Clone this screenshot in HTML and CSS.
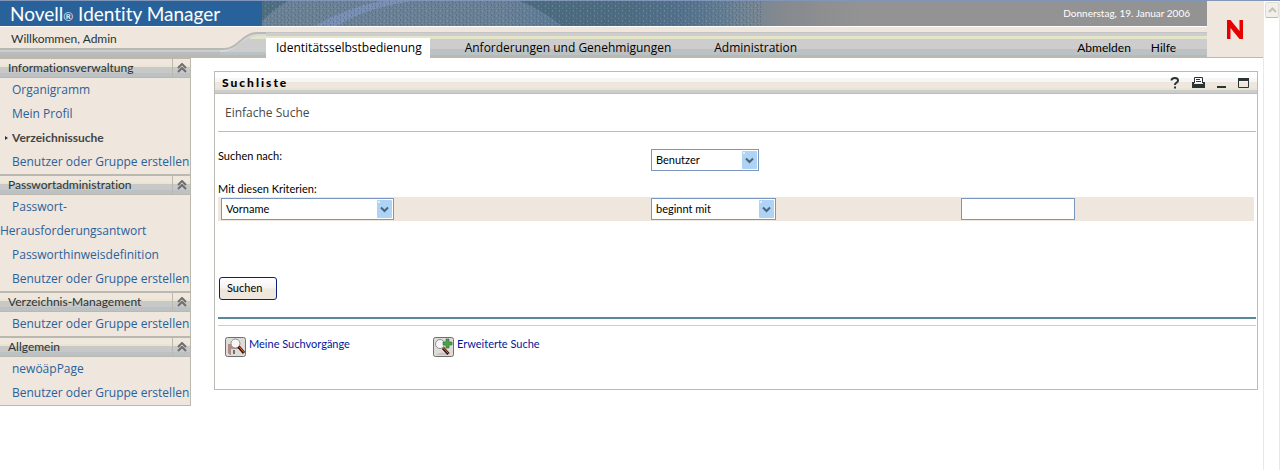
FILE: index.html
```html
<!DOCTYPE html>
<html lang="de">
<head>
<meta charset="utf-8">
<title>Novell Identity Manager</title>
<link rel="stylesheet" href="styles.css">
</head>
<body>
<div class="page">
  <div class="app">
    <header class="header">
      <div class="header-main">
        <div class="banner">
          <h1 class="brand">Novell<span class="reg">®</span> Identity Manager</h1>
          <svg class="banner-art" viewBox="0 0 600 25" width="600" height="25" preserveAspectRatio="xMinYMin slice" aria-hidden="true">
            <defs>
              <linearGradient id="sky" x1="0" x2="1" y1="0" y2="0">
                <stop offset="0" stop-color="#6d8294"/>
                <stop offset=".4" stop-color="#6a8196"/>
                <stop offset=".5" stop-color="#5d7c96"/>
                <stop offset=".68" stop-color="#567390"/>
                <stop offset=".78" stop-color="#6b8294"/>
                <stop offset=".87" stop-color="#868a8e"/>
                <stop offset="1" stop-color="#939393"/>
              </linearGradient>
              <linearGradient id="fade" x1="0" x2="1" y1="0" y2="0">
                <stop offset="0" stop-color="#4c6b7c"/>
                <stop offset=".5" stop-color="#4e6d82"/>
                <stop offset="1" stop-color="#567390" stop-opacity="0"/>
              </linearGradient>
              <pattern id="dots" width="7" height="5" patternUnits="userSpaceOnUse">
                <path d="M1 0h1v2h-1zM4 1h1v1h-1zM1 3h1v1h-1zM5 3h1v2h-1z" fill="#3b5a78" fill-opacity=".4"/>
                <path d="M3 0h1v1h-1zM6 2h1v1h-1zM3 4h1v1h-1z" fill="#8ea3bb" fill-opacity=".35"/>
              </pattern>
            </defs>
            <rect width="600" height="25" fill="url(#sky)"/>
            <path d="M0 0H26Q12 8 0 20Z" fill="#4f6e80"/>
            <path d="M52 25Q86 6 120 0H150Q100 8 76 25Z" fill="#7990b4"/>
            <path d="M258 0Q282 10 300 25H480V0Z" fill="url(#fade)"/>
            <rect width="500" height="25" fill="url(#dots)"/>
          </svg>
          <time class="date" datetime="2006-01-19">Donnerstag, 19. Januar 2006</time>
        </div>
        <div class="navbar">
          <div class="welcome">Willkommen, Admin</div>
          <svg class="curve" viewBox="0 0 46 31" width="46" height="31" aria-hidden="true">
            <path d="M0 22H4C18 22 22 6 38 6H46V31H0Z" fill="#cdcdcd"/>
            <path d="M36 9H46V12H29Q32 9 36 9Z" fill="#e4e4c8"/>
            <path d="M0 25H46V28H0Z" fill="#b9c2c4"/>
            <path d="M0 28H46V31H0Z" fill="#bbb8b0"/>
            <path d="M0 24C18 24 20 8 38 8H46" fill="none" stroke="#d8dadb" stroke-width="2"/>
            <path d="M0 22H4C18 22 22 6 38 6H46" fill="none" stroke="#b8b8b4" stroke-width="2"/>
          </svg>
          <nav class="tabs">
            <a class="tab tab-active" href="#">Identitätsselbstbedienung</a>
            <a class="tab" href="#">Anforderungen und Genehmigungen</a>
            <a class="tab" href="#">Administration</a>
            <span class="tab-gap"></span>
            <a class="tool" href="#">Abmelden</a>
            <a class="tool" href="#">Hilfe</a>
          </nav>
        </div>
      </div>
      <div class="logo">
        <svg viewBox="0 0 16 19" width="16" height="19" role="img" aria-label="Novell">
          <path d="M0 0H3.500L12.500 11V0H16V19H12.500L3.500 8V19H0Z" fill="#e60000"/>
        </svg>
      </div>
    </header>
    <div class="body">
      <nav class="sidebar">
        <section class="group">
          <h2 class="group-title">Informationsverwaltung<button class="collapse" type="button" aria-label="Einklappen"><svg width="10" height="10" viewBox="0 0 10 10"><path d="M1 5L5 1L9 5M1 9L5 5L9 9"/></svg></button></h2>
          <ul class="items">
            <li><a href="#">Organigramm</a></li>
            <li><a href="#">Mein Profil</a></li>
            <li class="current"><a href="#">Verzeichnissuche</a></li>
            <li><a href="#">Benutzer oder Gruppe erstellen</a></li>
          </ul>
        </section>
        <section class="group">
          <h2 class="group-title">Passwortadministration<button class="collapse" type="button" aria-label="Einklappen"><svg width="10" height="10" viewBox="0 0 10 10"><path d="M1 5L5 1L9 5M1 9L5 5L9 9"/></svg></button></h2>
          <ul class="items">
            <li class="wrapping"><a href="#">Passwort-<br>Herausforderungsantwort</a></li>
            <li><a href="#">Passworthinweisdefinition</a></li>
            <li><a href="#">Benutzer oder Gruppe erstellen</a></li>
          </ul>
        </section>
        <section class="group">
          <h2 class="group-title">Verzeichnis-Management<button class="collapse" type="button" aria-label="Einklappen"><svg width="10" height="10" viewBox="0 0 10 10"><path d="M1 5L5 1L9 5M1 9L5 5L9 9"/></svg></button></h2>
          <ul class="items">
            <li><a href="#">Benutzer oder Gruppe erstellen</a></li>
          </ul>
        </section>
        <section class="group">
          <h2 class="group-title">Allgemein<button class="collapse" type="button" aria-label="Einklappen"><svg width="10" height="10" viewBox="0 0 10 10"><path d="M1 5L5 1L9 5M1 9L5 5L9 9"/></svg></button></h2>
          <ul class="items">
            <li><a href="#">newöäpPage</a></li>
            <li><a href="#">Benutzer oder Gruppe erstellen</a></li>
          </ul>
        </section>
      </nav>
      <main class="portlet">
        <div class="portlet-bar">
          <h2 class="portlet-title">Suchliste</h2>
          <button class="bar-button" type="button" aria-label="Hilfe"><svg width="10" height="12" viewBox="0 0 10 12"><path d="M1.500 3.500Q1.500 1 4.800 1T8 3.500Q8 5 6.200 5.800Q5 6.400 5 8" fill="none" stroke="#2b3434" stroke-width="2"/><path d="M4 9.500h2v2h-2z" fill="#2b3434"/></svg></button>
          <button class="bar-button" type="button" aria-label="Drucken"><svg width="13" height="11" viewBox="0 0 13 11"><path d="M2.500 6V.5H10.500V6" fill="#fff" stroke="#2b3434"/><path d="M4 2.500h4M4 4.500h5" stroke="#2b3434"/><path d="M0 5h2v2h9v-2h2v6H0z" fill="#2b3434"/></svg></button>
          <button class="bar-button" type="button" aria-label="Minimieren"><svg width="9" height="11" viewBox="0 0 9 11"><path d="M0 9h9v2H0z" fill="#2b3434"/></svg></button>
          <button class="bar-button" type="button" aria-label="Maximieren"><svg width="11" height="10" viewBox="0 0 11 10"><path d="M.5 .5h10v9H.5z" fill="none" stroke="#2b3434"/><path d="M0 0h11v3H0z" fill="#2b3434"/></svg></button>
        </div>
        <form class="search">
          <h3 class="subtitle">Einfache Suche</h3>
          <div class="row subject">
            <label class="label" for="what">Suchen nach:</label>
            <span class="select w-108"><select id="what"><option>Benutzer</option></select><svg width="15" height="18" viewBox="0 0 15 18"><rect width="15" height="18" rx="1" fill="#aed3f5"/><path d="M1 1h2v2H1z" fill="#e6eef5"/><path d="M4 7.500L7.500 11L11 7.500" fill="none" stroke="#4a647c" stroke-width="2"/></svg></span>
          </div>
          <label class="label criteria-label" for="field">Mit diesen Kriterien:</label>
          <div class="row criteria">
            <span class="select w-173"><select id="field"><option>Vorname</option></select><svg width="15" height="18" viewBox="0 0 15 18"><rect width="15" height="18" rx="1" fill="#aed3f5"/><path d="M1 1h2v2H1z" fill="#e6eef5"/><path d="M4 7.500L7.500 11L11 7.500" fill="none" stroke="#4a647c" stroke-width="2"/></svg></span>
            <span class="select w-125"><select aria-label="Operator"><option>beginnt mit</option></select><svg width="15" height="18" viewBox="0 0 15 18"><rect width="15" height="18" rx="1" fill="#aed3f5"/><path d="M1 1h2v2H1z" fill="#e6eef5"/><path d="M4 7.500L7.500 11L11 7.500" fill="none" stroke="#4a647c" stroke-width="2"/></svg></span>
            <input class="text" type="text" aria-label="Wert">
          </div>
          <button class="submit" type="submit">Suchen</button>
        </form>
        <div class="links">
          <a class="link" href="#">
            <svg width="21" height="20" viewBox="0 0 21 20"><rect x=".5" y=".5" width="20" height="19" rx="2" fill="#dedbd8" stroke="#6f6f6f"/><path d="M3 7h11v11H5l-2-2z" fill="#b08c87"/><path d="M6 12h8v6H6z" fill="#dcdcdc"/><path d="M8 13h2v4H8z" fill="#77706e"/><circle cx="10.500" cy="6.500" r="4.500" fill="#f6f6f6" stroke="#909090"/><path d="M13.500 9.500L19 16" stroke="#3a1208" stroke-width="3"/><path d="M14 9.500L19 15.500" stroke="#e8793c"/></svg>
            Meine Suchvorgänge</a>
          <a class="link" href="#">
            <svg width="21" height="20" viewBox="0 0 21 20"><rect x=".5" y=".5" width="20" height="19" rx="2" fill="#dedbd8" stroke="#6f6f6f"/><path d="M3 18q5-5 14 0z" fill="#c4c2c2"/><circle cx="7" cy="7" r="4.500" fill="#f6f6f6" stroke="#909090"/><path d="M10 11L15.500 17" stroke="#3a1208" stroke-width="3"/><path d="M10.500 11L15.500 16.500" stroke="#e8793c"/><path d="M13 2h3v3h3v3h-3v3h-3V8h-3V5h3z" fill="#4fa04c" stroke="#2c7030" stroke-width=".6"/></svg>
            Erweiterte Suche</a>
        </div>
      </main>
    </div>
  </div>
  <div class="scrollbar">
    <button class="scroll-up" type="button" aria-label="Nach oben"><svg width="9" height="6" viewBox="0 0 9 6"><path d="M1 5L4.500 1.500L8 5" fill="none" stroke="#c4c2ba" stroke-width="2"/></svg></button>
  </div>
</div>
</body>
</html>
```
FILE: styles.css
```css
* { box-sizing: border-box; }

body {
  margin: 0;
  background: #fff;
  color: #000;
  font-family: Lato, "Liberation Sans", sans-serif;
  font-size: 12px;
  font-variant-ligatures: none;
}

a { color: inherit; text-decoration: none; }
button { font: inherit; padding: 0; border: 0; background: none; }
svg { display: block; }
h1, h2, h3, ul { margin: 0; padding: 0; font-weight: normal; }
ul { list-style: none; }

.page { display: flex; min-height: 100vh; border-top: 1px solid #8095b8; }
.app { flex: 1; min-width: 0; }

/* Header */
.header { display: flex; }
.header-main { flex: 1; min-width: 0; }
.banner {
  display: flex;
  height: 26px;
  background: #939393;
  color: #fff;
  border-bottom: 1px solid #fff;
}
.brand {
  flex: none;
  width: 262px;
  padding-left: 10px;
  background: #29629b;
  font-size: 19px;
  line-height: 25px;
  white-space: nowrap;
}
.reg { font-size: 12px; }
.banner-art { flex: 0 1 600px; min-width: 0; height: 25px; }
.date { margin-left: auto; padding-right: 17px; font-size: 10px; line-height: 24px; white-space: nowrap; }

.navbar { display: flex; height: 31px; background: #efe6de; }
.welcome {
  flex: none;
  width: 220px;
  padding-left: 11px;
  line-height: 24px;
  color: #2b3434;
  background: linear-gradient(#efe6de 21px, #b8b8b4 21px 23px, #cdcdcd 23px 25px, #b9bcbc 25px 28px, #bbb8b0 28px);
}
.curve { flex: none; }
.tabs {
  display: flex;
  flex: 1;
  align-items: stretch;
  background: linear-gradient(#efe6de 5px, #c4c4c4 5px 6px, #cdcdcd 6px 9px, #e4e4c8 9px 12px, #cdcdcd 12px 22px, #c0c0c0 22px 25px, #b9c2c4 25px 28px, #bbb8b0 28px);
}
.tab, .tool { margin-top: 11px; line-height: 20px; white-space: nowrap; }
.tab { padding: 0 8px 0 10px; margin-right: 25px; font-family: "Open Sans", sans-serif; }
.tab-active { background: #fff; }
.tab-gap { flex: 1; }
.tool { margin-right: 20px; }
.tool:last-child { margin-right: 31px; }
.logo {
  display: flex;
  align-items: center;
  justify-content: center;
  width: 56px;
  background: #efe6de;
  border-bottom: 1px solid #bbb8b0;
}

/* Sidebar */
.body { display: flex; align-items: flex-start; }
.sidebar {
  flex: none;
  width: 191px;
  background: #efe6de;
  border: solid #bbb8b0;
  border-width: 0 1px 1px 0;
}
.group-title {
  display: flex;
  height: 21px;
  padding-left: 8px;
  border: solid #bbb8b0;
  border-width: 2px 0 1px;
  background: linear-gradient(#efe6de 6px, #e8e6d0 6px 8px, #c8c8c8 8px 14px, #bcc2c4 14px);
  color: #2b3434;
  font-size: 12px;
  line-height: 18px;
}
.group:first-child .group-title { height: 20px; border-top-width: 1px; }
.collapse {
  display: grid;
  place-items: center;
  width: 18px;
  margin-left: auto;
  border-left: 1px solid #bbb8b0;
}
.collapse path { fill: none; stroke: #6e6e6e; stroke-width: 2; }
.items { font-family: "Open Sans", sans-serif; }
.items li { padding-left: 12px; line-height: 24px; color: #29629b; white-space: nowrap; }
.items .wrapping { padding-left: 0; text-indent: 12px; }
.items .current { padding-left: 5px; color: #444; font-family: Lato, sans-serif; font-weight: bold; }
.current::before {
  content: "";
  display: inline-block;
  margin-right: 4px;
  border: solid transparent;
  border-width: 2px 0 2px 3px;
  border-left-color: #333;
  vertical-align: 2px;
}

/* Portlet */
.portlet {
  flex: 1;
  min-width: 0;
  margin: 13px 5px 16px 23px;
  border: 1px solid #bbbbb5;
}
.portlet-bar {
  display: flex;
  align-items: center;
  gap: 12px;
  height: 22px;
  padding: 0 8px 0 7px;
  border-bottom: 1px solid #bbbbb5;
  background: linear-gradient(#fff 6px, #f6f6f6 6px 10px, #efe6de 10px 16px, #e8e6d0 16px 18px, #cdcdcd 18px);
}
.portlet-title { margin-right: auto; font-size: 12px; font-weight: 900; letter-spacing: 2px; }
.search { padding: 0 1px 0 3px; }
.subtitle {
  height: 38px;
  padding-left: 7px;
  border-bottom: 1px solid #bdbdbd;
  color: #4a4a4a;
  font-family: "Open Sans", sans-serif;
  font-size: 12px;
  line-height: 38px;
}
.row { display: grid; grid-template-columns: 430fr 310fr 296fr; align-items: center; }
.subject { margin: 17px 2px 0 0; align-items: start; }
.row .select, .text { margin-left: 3px; }
.label { font-size: 11px; line-height: 14px; }
.criteria-label { display: block; margin-top: 11px; }
.criteria { height: 24px; margin: 1px 2px 0 0; background: #efe6de; }
.select { display: inline-grid; align-items: center; height: 22px; background: #fff; border: 1px solid #7a96bf; }
.select select, .select svg { grid-area: 1 / 1; }
.select svg { justify-self: end; margin-right: 1px; pointer-events: none; }
.select select {
  width: 100%;
  height: 20px;
  padding: 0 20px 2px 4px;
  border: 0;
  appearance: none;
  background: none;
  color: #000;
  font: inherit;
  font-size: 11px;
}
.w-108 { width: 108px; }
.w-125 { width: 125px; }
.w-173 { width: 173px; }
.text { width: 114px; height: 22px; border: 1px solid #7a96bf; background: #fff; font: inherit; }
.submit {
  display: block;
  height: 23px;
  margin: 56px 0 17px 1px;
  padding: 0 14px 2px 7px;
  border: 1px solid #0c1f77;
  border-radius: 3px;
  background: linear-gradient(#fff, #f6f3f0 45%, #efe6de 55%);
  font-size: 11px;
}
.links {
  display: flex;
  margin: 0 1px 0 3px;
  padding: 0 7px 32px;
  border-top: 2px solid #5a8799;
  background: linear-gradient(#fff 6px, #cdcdcd 6px 7px, #fff 7px);
}
.link { display: flex; gap: 3px; width: 208px; margin-top: 18px; color: #0018a0; font-size: 11px; line-height: 14px; }

/* Window scrollbar */
.scrollbar { width: 17px; border: solid #efe6de; border-width: 0 1px; }
.scroll-up {
  display: grid;
  place-items: center;
  width: 14px;
  height: 16px;
  margin: 1px 0 0 1px;
  border: 1px solid #e0ddd6;
  border-bottom-color: #bbb8b0;
  border-radius: 2px;
  background: #f3efe9;
}
```
